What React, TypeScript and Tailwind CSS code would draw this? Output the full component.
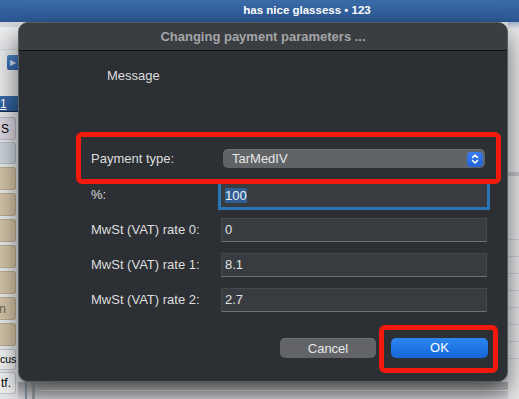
import React from "react";

const tanTops = [168, 194, 220, 246, 272, 298, 324];

function LeftStrip() {
  return (
    <div className="relative w-[18px] shrink-0 overflow-hidden bg-[#e5e6e8] flex flex-col">
      <div className="h-[5px] bg-[#d5d8dc]" />
      <div className="h-[23px] bg-gradient-to-b from-[#eceef0] to-[#e1e3e6] border-b border-[#cfd2d5]" />
      <div className="mt-[5px] ml-[7px] w-[11px] h-[15px] rounded-l-[2px] bg-gradient-to-b from-[#4d80c0] to-[#2f63a6] flex items-center pl-[3px]">
        <span className="text-[8px] leading-none text-[#c9dbf2]">▶</span>
      </div>
      <div className="mt-[26px] h-[16px] bg-gradient-to-b from-[#3a6aa8] to-[#2b5893] border-b border-[#182f50] flex items-center">
        <span className="text-[12px] leading-none text-white underline">1</span>
      </div>
      <div className="mt-[5px] h-[23px] w-[16px] rounded-r-[3px] bg-[#d8d4de] border-y border-r border-[#b9b6bf] flex items-center justify-end pr-[6px]">
        <span className="text-[12px] text-black">S</span>
      </div>
      <div className="mt-[2px] h-[22px] w-[16px] rounded-r-[3px] bg-[#cbd2da] border-y border-r border-[#b5bcc4]" />
      {tanTops.map((t, i) => (
        <div
          key={t}
          className="mt-[3px] h-[23px] w-[16px] rounded-r-[3px] bg-[#d1c2a4] border-y border-r border-[#baab8f] flex items-center justify-end pr-[9px]"
        >
          {i === 5 ? <span className="text-[12px] text-[#6b604d]">n</span> : null}
        </div>
      ))}
      <div className="mt-[3px] h-[21px] w-[16px] rounded-r-[3px] bg-[#eef0f2] border-y border-r border-[#c2c5c9] flex items-center justify-start">
        <span className="text-[10.5px] text-black">cus</span>
      </div>
      <div className="mt-[2px] h-[22px] w-[16px] rounded-r-[3px] bg-[#eef0f2] border-y border-r border-[#c2c5c9] flex items-center justify-start pl-[1px]">
        <span className="text-[12px] text-black">tf.</span>
      </div>
    </div>
  );
}

function RightStrip() {
  const lines = [240, 257, 275, 292, 310, 328, 347, 363];
  return (
    <div className="w-[11px] shrink-0 bg-[#e7e8ea] flex flex-col">
      <div className="h-[6px] bg-gradient-to-b from-[#9fb2c9] to-[#dfe2e6]" />
      <div className="mt-[144px] h-[4px] bg-[#c4c6c9]" />
      {lines.map((l, i) => (
        <div key={l} className={`${i === 0 ? "mt-[63px]" : "mt-[16px]"} h-px bg-[#cdd0d3]`} />
      ))}
    </div>
  );
}

function Field({ value }: { value: string }) {
  return (
    <div className="w-[266px] h-[24px] bg-[#383b3f] border border-[#45484c] border-b-[#6c6f73] flex items-center pl-[3px]">
      <span className="text-[13px] text-[#e2e2e2]">{value}</span>
    </div>
  );
}

function Row({ label, children, className }: { label: string; children: React.ReactNode; className: string }) {
  return (
    <div className={`flex items-center ${className}`}>
      <div className="w-[130px] text-[13px] text-[#dedede]">{label}</div>
      {children}
    </div>
  );
}

function Dialog() {
  return (
    <div className="absolute left-[18px] top-[22px] w-[490px] h-[360px] rounded-[10px] bg-[#2c3034] border border-[#595c60] shadow-[0_12px_24px_rgba(0,0,0,0.55)] flex flex-col">
      <div className="h-[28px] shrink-0 rounded-t-[10px] bg-[#3a3d41] border-b border-[#111214] flex items-center justify-center">
        <span className="text-[13px] font-bold text-[#a4a5a7]">Changing payment parameters ...</span>
      </div>
      <div className="flex flex-col pl-[72px]">
        <div className="mt-[17px] ml-[16px] h-[16px] text-[13px] leading-[16px] text-[#dedede]">Message</div>
        <Row label="Payment type:" className="mt-[65px] h-[19px]">
          <div className="ml-[2px] w-[262px] h-[19px] rounded-[5px] bg-[#616467] border-t border-[#6e7174] flex items-center justify-between pl-[9px] pr-[2px]">
            <span className="text-[13px] text-[#e6e6e6]">TarMedIV</span>
            <div className="w-[16px] h-[15px] rounded-[4px] bg-gradient-to-b from-[#3a7df0] to-[#2463d6] flex items-center justify-center">
              <svg width="10" height="12" viewBox="0 0 10 12" fill="none" stroke="white" strokeWidth="1.5" strokeLinecap="round" strokeLinejoin="round">
                <path d="M2.5 4.5 L5 2 L7.5 4.5" />
                <path d="M2.5 7.5 L5 10 L7.5 7.5" />
              </svg>
            </div>
          </div>
        </Row>
        <Row label="%:" className="mt-[15px] h-[24px]">
          <div className="w-[266px] h-[24px] bg-[#383b3f] outline outline-[3px] outline-[#2a76b4] flex items-center pl-[4px]">
            <span className="text-[13px] leading-[15px] text-[#eef2f7] bg-[#315f92]">100</span>
          </div>
        </Row>
        <Row label="MwSt (VAT) rate 0:" className="mt-[11px] h-[24px]">
          <Field value="0" />
        </Row>
        <Row label="MwSt (VAT) rate 1:" className="mt-[11px] h-[24px]">
          <Field value="8.1" />
        </Row>
        <Row label="MwSt (VAT) rate 2:" className="mt-[11px] h-[24px]">
          <Field value="2.7" />
        </Row>
      </div>
      <div className="mt-[26px] pl-[261px] flex gap-[15px]">
        <div className="w-[96px] h-[20px] rounded-[5px] bg-[#626467] border-t border-[#707275] flex items-center justify-center">
          <span className="text-[13px] text-[#e8e8e8]">Cancel</span>
        </div>
        <div className="w-[97px] h-[20px] rounded-[5px] bg-gradient-to-b from-[#2b86f2] to-[#1767d8] flex items-center justify-center">
          <span className="text-[13px] text-white">OK</span>
        </div>
      </div>
      <div className="absolute left-[57px] top-[109px] w-[425px] h-[52px] rounded-[6px] border-[5px] border-[#f11a0c]" />
      <div className="absolute left-[360px] top-[302px] w-[119px] h-[48px] rounded-[6px] border-[5px] border-[#f11a0c]" />
    </div>
  );
}

export default function App() {
  return (
    <div className="relative w-[519px] h-[399px] overflow-hidden bg-[#e5e6e8] font-['Liberation_Sans',Arial,sans-serif] flex flex-col">
      <div className="h-[22px] shrink-0 bg-gradient-to-b from-[#3a6aa8] to-[#2b5893] flex items-center justify-center pl-[95px]">
        <span className="text-[11.5px] font-bold text-white">has nice glassess • 123</span>
      </div>
      <div className="flex flex-1">
        <LeftStrip />
        <div className="flex-1 flex flex-col justify-end bg-[#dcdee1]">
          <div className="h-[17px] bg-gradient-to-b from-[#a9abae] to-[#dadcdf] flex">
            <div className="ml-[7px] w-[2px] bg-[#8798ac]" />
            <div className="ml-[5px] w-[3px] bg-[#9ea4ab]" />
            <div className="flex-1 flex flex-col justify-center ml-[6px]">
              <div className="h-px bg-[#e8e9ea]" />
            </div>
          </div>
        </div>
        <RightStrip />
      </div>
      <Dialog />
    </div>
  );
}
